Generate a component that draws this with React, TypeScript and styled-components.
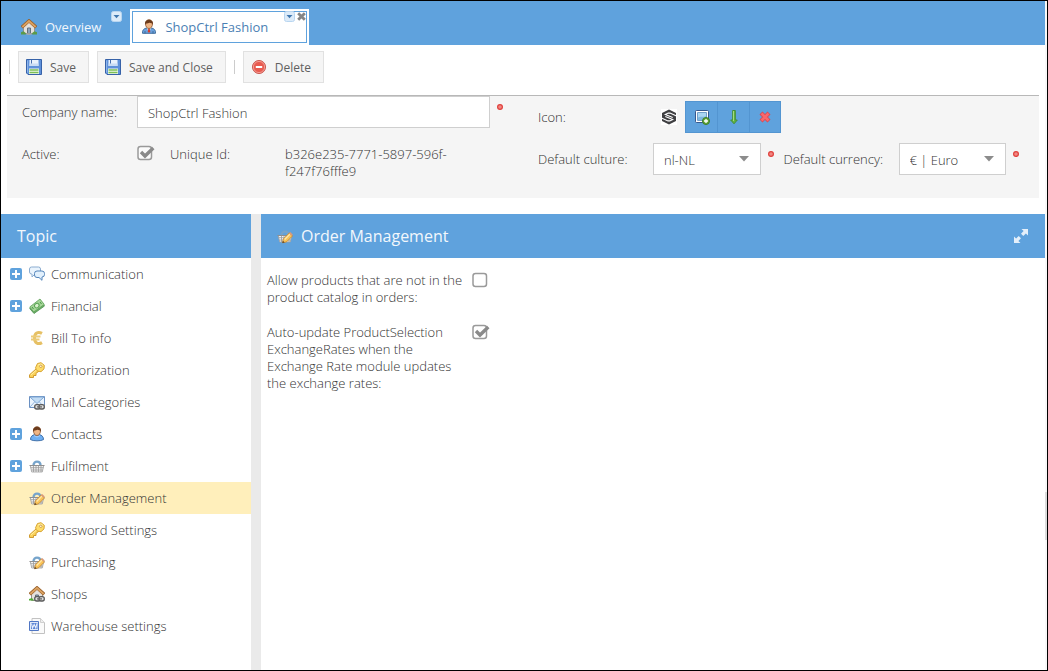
import React, { useState } from 'react';
import styled, { createGlobalStyle } from 'styled-components';

const blue = '#5fa2dd';

const GlobalStyle = createGlobalStyle`
  * { box-sizing: border-box; }
  body {
    margin: 0;
    background: #fff;
    color: #333;
    font: 300 13px/17px "Open Sans", "Noto Sans", sans-serif;
  }
  button, input, select { font: inherit; color: inherit; }
`;

const Frame = styled.div`
  display: flex;
  min-height: 100vh;
  border: 1px solid #000;
`;

const Page = styled.div`
  display: flex;
  flex-direction: column;
  flex: 1;
  min-width: 0;
`;

const ScrollRail = styled.div`
  display: grid;
  grid-template-rows: 491fr 48px 130fr;
  width: 2px;
  background: #f8f8f8;
`;

const ScrollThumb = styled.div`
  grid-row: 2;
  background: #dcdcdc;
`;

const TabBar = styled.nav`
  display: flex;
  align-items: flex-end;
  height: 44px;
  padding-left: 10px;
  background: ${blue};
`;

const TabItem = styled.div<{ $active?: boolean }>`
  position: relative;
  height: 36px;
  margin-right: ${p => (p.$active ? 0 : 5)}px;
  padding: 2px;
  background: ${p => (p.$active ? '#fff' : 'transparent')};
`;

const TabButton = styled.button<{ $active?: boolean }>`
  display: flex;
  align-items: center;
  gap: 8px;
  height: 32px;
  padding: 0 ${p => (p.$active ? 38 : 21)}px 0 ${p => (p.$active ? 8 : 7)}px;
  border: 1px solid ${blue};
  background: transparent;
  color: ${p => (p.$active ? '#4b7fb4' : '#f2f7fc')};
  font-weight: 400;
  white-space: nowrap;
`;

const TabBadges = styled.div`
  position: absolute;
  top: 2px;
  right: 3px;
  display: flex;
  gap: 2px;
`;

const BadgeButton = styled.button`
  display: flex;
  padding: 0;
  border: 0;
  background: transparent;
`;

const Toolbar = styled.div`
  display: flex;
  align-items: center;
  gap: 8px;
  height: 44px;
  padding-left: 8px;
`;

const Separator = styled.span`
  width: 1px;
  height: 14px;
  background: #ccc;
`;

const ToolButton = styled.button`
  display: flex;
  align-items: center;
  gap: 8px;
  height: 32px;
  padding: 0 12px 0 7px;
  border: 1px solid #e1e1e1;
  background: #f5f5f5;
  color: #606060;
  font-size: 12px;
  font-weight: 400;
`;

const CompanyForm = styled.form`
  display: grid;
  grid-template-columns: 1fr 1fr;
  height: 103px;
  margin: 6px 6px 16px;
  border-top: 1px solid #b8b8b8;
  background: #f5f5f5;
`;

const FormColumn = styled.div<{ $top?: number }>`
  display: flex;
  flex-direction: column;
  gap: 10px;
  min-width: 0;
  padding: ${p => p.$top || 0}px 10px 0 15px;
`;

const FormRow = styled.div`
  display: flex;
  align-items: flex-start;
  min-height: 32px;
`;

const FieldLabel = styled.label`
  flex: 0 0 115px;
  padding-top: 8px;
`;

const TextInput = styled.input`
  flex: 1;
  min-width: 0;
  height: 32px;
  padding: 2px 10px 0;
  border: 1px solid #cfcfcf;
  background: #fff;
  font-weight: 300;
`;

const RequiredMark = styled.span`
  display: flex;
  flex: 0 0 23px;
  padding: 8px 0 0 7px;
`;

const CheckCell = styled.span`
  display: flex;
  flex: 0 0 33px;
  padding-top: 7px;
`;

const UniqueValue = styled.output`
  flex: 1;
  padding-top: 8px;
`;

const CheckWrap = styled.span`
  display: grid;
  width: 18px;
  height: 18px;
  & > * { grid-area: 1 / 1; }
  svg { pointer-events: none; }
`;

const NativeCheck = styled.input`
  appearance: none;
  width: 18px;
  height: 18px;
  margin: 0;
`;

const SelectWrap = styled.span`
  display: grid;
  flex: 1;
  align-items: center;
  min-width: 0;
  & > * { grid-area: 1 / 1; }
  svg { justify-self: end; margin-right: 12px; pointer-events: none; }
`;

const NativeSelect = styled.select`
  appearance: none;
  width: 100%;
  height: 32px;
  padding: 2px 28px 0 10px;
  border: 1px solid #cfcfcf;
  border-radius: 0;
  background: #fff;
  font-weight: 300;
`;

const IconPreview = styled.span`
  display: flex;
  padding: 8px 8px 0;
`;

const IconActions = styled.div`
  display: flex;
  border: 1px solid #5395d1;
`;

const IconAction = styled.button`
  display: flex;
  align-items: center;
  justify-content: center;
  width: 31px;
  height: 30px;
  padding: 0;
  border: 0;
  background: ${blue};
  & + & { border-left: 1px solid #5395d1; }
  &:nth-child(2) { width: 32px; }
`;

const Workspace = styled.div`
  display: grid;
  grid-template-columns: 250px 10px 1fr;
  flex: 1;
`;

const Splitter = styled.div`
  background: #eaeaea;
`;

const PanelHeader = styled.header`
  display: flex;
  align-items: center;
  gap: 8px;
  height: 44px;
  padding: 0 16px;
  background: ${blue};
  color: #f2f7fc;
`;

const PanelTitle = styled.h2`
  flex: 1;
  margin: 0;
  font-size: 16px;
  line-height: 22px;
  font-weight: 400;
`;

const TopicList = styled.ul`
  margin: 0;
  padding: 0;
  list-style: none;
`;

const TopicRow = styled.li<{ $selected?: boolean }>`
  display: grid;
  grid-template-columns: 19px 1fr;
  align-items: center;
  height: 32px;
  padding-left: 9px;
  background: ${p => (p.$selected ? '#ffefbb' : 'transparent')};
`;

const TopicLink = styled.a`
  grid-column: 2;
  display: flex;
  align-items: center;
  gap: 6px;
  color: inherit;
  text-decoration: none;
`;

const Settings = styled.div`
  display: flex;
  flex-direction: column;
  gap: 18px;
  padding: 14px 6px;
`;

const SettingRow = styled.div`
  display: grid;
  grid-template-columns: 200px 18px;
  gap: 5px;
`;

/* ---------- icons ---------- */

const Svg = ({ w = 16, h = 16, children }: { w?: number; h?: number; children: React.ReactNode }) => (
  <svg width={w} height={h} viewBox={`0 0 ${w} ${h}`} fill="none" aria-hidden="true">{children}</svg>
);

const HouseShape = () => (
  <>
    <path d="M2.500 8 8 3l5.500 5v6.500h-11z" fill="#e4e1dc" stroke="#96928d" />
    <path d="M6.500 9h3v5.500h-3z" fill="#8aa3bd" stroke="#66707c" />
    <path d="M.8 8.300 8 1.800l7.200 6.500" stroke="#99602b" strokeWidth="3.200" />
    <path d="M1.300 8 8 2l6.700 6" stroke="#dba261" strokeWidth="1.700" />
  </>
);

const HouseIcon = () => (
  <Svg>
    <HouseShape />
    <path d="M0 15.500v-2.200l2.500-1 2.300 1.700v1.500zM16 15.500v-2.200l-2.500-1-2.300 1.700v1.500z" fill="#5b9a48" />
    <path d="M5.500 15h5" stroke="#aaa" strokeWidth="1.500" />
  </Svg>
);

const ChainShape = () => (
  <>
    <rect x="5.700" y="10.700" width="5.600" height="4.300" rx="2" fill="#ddd" stroke="#5a5a5a" strokeWidth="1.300" />
    <rect x="10" y="10.700" width="5.300" height="4.300" rx="2" fill="#ddd" stroke="#5a5a5a" strokeWidth="1.300" />
    <path d="M8 12.900h5" stroke="#666" strokeWidth="1.300" />
  </>
);

const ShopsIcon = () => (
  <Svg>
    <HouseShape />
    <path d="M0 14.500v-1.500l3-1 2 2.500z" fill="#4fae35" />
    <ChainShape />
  </Svg>
);

const HeadShape = () => (
  <>
    <path d="M4.500 4.500c0-5 7-5 7 0 0 3.200-1.600 5-3.500 5s-3.500-1.800-3.500-5z" fill="#f0b584" stroke="#88522d" strokeWidth=".8" />
    <path d="M4 5.700C3.200-.9 12.800-.9 12 5.700 11.200 3.700 9.800 4.200 8.400 3.700 6.600 4.500 5 3.900 4 5.700z" fill="#6c3b1c" />
  </>
);

const BusinessUserIcon = () => (
  <Svg>
    <path d="M1.500 14.300c-.4-3 1.400-4.800 4-5.300h5c2.600.5 4.400 2.300 4 5.300z" fill="#6ba1dd" stroke="#42709f" />
    <path d="M5.800 8.800h4.400L8 13.500z" fill="#f5f5f5" />
    <path d="M7.300 9.500h1.400l.5 3L8 14l-1.200-1.500z" fill="#d43d2c" />
    <path d="M4 12v2.500M12 12v2.500" stroke="#3f6c9c" />
    <HeadShape />
  </Svg>
);

const ContactIcon = () => (
  <Svg>
    <path d="M1.500 13.600c0-2.800 1.600-4.600 4.500-5h4c2.900.4 4.500 2.200 4.500 5-2.500 1.600-10.500 1.600-13 0z" fill="#6faff3" stroke="#3f70aa" />
    <path d="M5 9.500c1.800 1.800 4.200 1.800 6 0" stroke="#a7d0fb" />
    <HeadShape />
  </Svg>
);

const SaveIcon = () => (
  <Svg>
    <path d="M.5.500h15v15H2L.500 14z" fill="#5f91da" stroke="#3762a8" />
    <path d="M1.500 1.500v12" stroke="#8db4ea" />
    <path d="M3.500 1h9v6h-9z" fill="#eaf2fc" />
    <path d="M3.500 4.500h9V7h-9z" fill="#c9dcf4" />
    <path d="M5.500 1v3.500" stroke="#476fae" />
    <path d="M3 9.500h10v5.500H3z" fill="#f1f8ec" />
    <path d="M3.500 11h9M3.500 13.500h9" stroke="#7bbf55" strokeWidth="1.300" />
  </Svg>
);

const DeleteIcon = () => (
  <Svg>
    <circle cx="8" cy="8" r="6.500" fill="#e85b50" stroke="#c9564e" />
    <circle cx="8" cy="8" r="5.600" stroke="#f4a198" strokeWidth=".9" />
    <path d="M4.800 7h6.400v2H4.800z" fill="#fff" />
  </Svg>
);

const DropBadgeIcon = () => (
  <Svg w={11} h={11}>
    <rect x=".5" y=".5" width="10" height="10" rx="2" fill="#dcebf9" stroke="#b9d6f0" />
    <path d="M2.500 4h6l-3 3.200z" fill="#3f77af" />
  </Svg>
);

const CloseBadgeIcon = () => (
  <Svg w={9} h={11}>
    <path d="m1.200 2.200 6.600 6.600m0-6.600-6.600 6.600" stroke="#868686" strokeWidth="2.800" />
  </Svg>
);

const RequiredIcon = () => (
  <Svg w={6} h={6}>
    <circle cx="3" cy="3" r="2.400" fill="#f18782" stroke="#e0403c" strokeWidth="1.200" />
  </Svg>
);

const ShopCtrlLogo = () => (
  <Svg>
    <path d="M0 0h16v16H0z" fill="#fff" />
    <path d="M8 .5 15 4v8l-7 3.500L1 12V4z" fill="#3f3f42" />
    <path d="M15.500 7 9 4.100H7.200L4.300 5.500 11.700 8.600" stroke="#fff" strokeWidth="1.100" />
    <path d="M.5 9 7 11.900h1.800l2.900-1.400L4.300 7.400" stroke="#fff" strokeWidth="1.100" />
  </Svg>
);

const PictureAddIcon = () => (
  <Svg>
    <rect x="1.500" y="1.500" width="13" height="12" rx="1" fill="#fff" stroke="#36588d" />
    <path d="M3.500 3.500h9v8h-9z" fill="#a9d5f2" stroke="#729fca" />
    <path d="M4 8.500c3-2 5 .5 8-1.500v4H4z" fill="#7cb7df" />
    <circle cx="12" cy="12" r="3.500" fill="#65a83c" stroke="#3d7e26" />
    <path d="M12 10v4m-2-2h4" stroke="#fff" strokeWidth="1.300" />
  </Svg>
);

const DownArrowIcon = () => (
  <Svg>
    <path d="M6.700 1.500h2.600V11h2L8 14.800 4.700 11h2z" fill="#62b441" stroke="#448f38" />
    <path d="M7.500 2v10" stroke="#a5db82" />
  </Svg>
);

const RedCrossIcon = () => (
  <Svg>
    <path d="m4 4 8 8m0-8-8 8" stroke="#dc4650" strokeWidth="4.200" />
    <path d="m4.500 4.500 7 7m0-7-7 7" stroke="#fa686c" strokeWidth="2.600" />
  </Svg>
);

const CaretIcon = () => (
  <Svg w={10} h={6}>
    <path d="M0 0h10L5 5.500z" fill="#8c8c8c" />
  </Svg>
);

const ExpandIcon = () => (
  <Svg>
    <path d="M8.500 1H15v6.500l-2.100-2.100-2.600 2.600-2.300-2.300 2.600-2.600zM7.500 15H1V8.500l2.100 2.100L5.700 8 8 10.300l-2.600 2.600z" fill="#e4effa" />
  </Svg>
);

const PlusIcon = () => (
  <Svg w={12} h={12}>
    <rect width="12" height="12" rx="2" fill={blue} />
    <path d="M6 2v8M2 6h8" stroke="#fff" strokeWidth="2" />
  </Svg>
);

const ChatIcon = () => (
  <Svg>
    <path d="M2.500 1h7q2 0 2 2v3q0 2-2 2H6L3 11V8H2.500q-2 0-2-2V3q0-2 2-2z" fill="#eaf4fd" stroke="#8bacd0" />
    <path d="M8 5h5q2.500 0 2.500 2.500v1Q15.500 11 13 11v3.300L10 11.500H8q-2.500 0-2.500-2.500V7.500Q5.500 5 8 5z" fill="#e1f0fd" stroke="#5485bb" />
  </Svg>
);

const MoneyIcon = () => (
  <Svg>
    <path d="M.7 10.500 11.500 2.500l4 5.500L5 15.500z" fill="#6fb268" stroke="#4a8d4c" strokeWidth=".8" />
    <path d="M.7 9 11 1l4.300 5.500L4.700 14z" fill="#a5d697" stroke="#5da058" strokeWidth=".8" />
    <ellipse cx="7.800" cy="7.600" rx="2.400" ry="2.100" transform="rotate(-37 7.800 7.600)" fill="#d9f0cd" stroke="#5aa355" />
    <path d="m3 9 1.500 2M11 4l1.500 2" stroke="#4b944b" />
  </Svg>
);

const EuroIcon = () => (
  <Svg>
    <path d="M13 3.400C8.800 1 5.500 3.300 5.500 8S8.800 15 13 12.600" stroke="#e6c064" strokeWidth="3" />
    <path d="M2 6.500h9.500M2 9.500h8.500" stroke="#ebcb78" strokeWidth="2" />
  </Svg>
);

const KeyIcon = () => (
  <Svg>
    <path d="m7.500 6.500-7 6.300V15.500h4v-2H7v-2.200l3.300-2.300" fill="#fbd35b" stroke="#d09c32" />
    <path d="M8.500 1.500 12 .7l3.300 2.600-.3 3.600-3 2.800-3.700-.7-1.800-3.200z" fill="#fedc68" stroke="#d8a436" />
    <path d="m9 3 3-1 2 1.500M7.500 8 2 12.800" stroke="#fff0a5" />
    <circle cx="11.800" cy="4.300" r="1.200" fill="#fff" stroke="#c8902c" strokeWidth=".8" />
  </Svg>
);

const MailIcon = () => (
  <Svg>
    <path d="M.5 2.500h15v11H.500z" fill="#e9f3fd" stroke="#6a90c2" />
    <path d="m1 13 5-5.500m9 5.500-5-5.500" stroke="#91b4dc" />
    <path d="M1 3h14L8 9.500z" fill="#c2dcf4" stroke="#7ea6d3" />
    <path d="M6 11h9.500v4H6z" fill="#d5dde5" />
    <ChainShape />
  </Svg>
);

const BasketShape = () => (
  <>
    <path d="M4.500 7.500C4.500 2.300 11.500 2.300 11.500 7.500" stroke="#76a4cb" strokeWidth="2.400" />
    <path d="M1.300 7.500h13.400l-1.400 6.500H2.700z" fill="#f4f4f4" stroke="#a0a0a0" strokeWidth=".8" />
    <path d="M4.500 7v7M7 7v7m2.500-7v7M12 7v7M1.500 9.700h13m-12 2.300h11.300" stroke="#999" strokeWidth=".8" />
    <path d="M.5 7.500h15" stroke="#8f8f8f" />
  </>
);

const BasketIcon = () => <Svg><BasketShape /></Svg>;

const BasketEditIcon = () => (
  <Svg>
    <BasketShape />
    <path d="m5.500 14.800.9-4 6-6 3.100 3.100-6 6z" fill="#fac458" stroke="#c08636" strokeWidth=".8" />
    <path d="m7.700 11.500 5.300-5.300" stroke="#ffe9ae" strokeWidth="1.200" />
    <path d="m12 5.200 1.200-1.200 2.600 2.600-1.200 1.200z" fill="#d99a7c" />
    <path d="m5.300 15 .6-2.300 1.800 1.800z" fill="#54402c" />
  </Svg>
);

const DocIcon = () => (
  <Svg>
    <path d="M3 .5h8.500l4 4v11H3z" fill="#fafafa" stroke="#c2c2c2" />
    <path d="M11.500.500v4h4" fill="#eee" stroke="#cfcfcf" />
    <path d="M.5 3.500h9v9h-9z" fill="#dfe8f8" stroke="#5076c4" />
    <path d="M2 5h6.500v6H2z" fill="#5c85d6" />
    <path d="m2.500 5.500 1 4.500L5.200 6.500l1.600 3.500L8 5.500" stroke="#e8effb" strokeWidth="1.100" />
  </Svg>
);

const CheckBox = ({ id, initial = false }: { id: string; initial?: boolean }) => {
  const [on, setOn] = useState(initial);
  return (
    <CheckWrap>
      <NativeCheck id={id} type="checkbox" checked={on} onChange={() => setOn(!on)} />
      <Svg w={18} h={18}>
        <rect x="1" y="1.500" width="13.500" height="13" rx="2.500" fill="#fff" fillOpacity=".6" stroke="#9a9a9a" strokeWidth="1.500" />
        {on && <path d="m4 7 4 4L16.300 3" stroke="#8a8a8a" strokeWidth="3.400" />}
      </Svg>
    </CheckWrap>
  );
};

const Required = () => <RequiredMark title="Required"><RequiredIcon /></RequiredMark>;

const Dropdown = ({ id, value }: { id: string; value: string }) => (
  <SelectWrap>
    <NativeSelect id={id} defaultValue={value}><option>{value}</option></NativeSelect>
    <CaretIcon />
  </SelectWrap>
);

type Topic = { name: string; icon: React.ComponentType; expandable?: boolean };

const topics: Topic[] = [
  { name: 'Communication', icon: ChatIcon, expandable: true },
  { name: 'Financial', icon: MoneyIcon, expandable: true },
  { name: 'Bill To info', icon: EuroIcon },
  { name: 'Authorization', icon: KeyIcon },
  { name: 'Mail Categories', icon: MailIcon },
  { name: 'Contacts', icon: ContactIcon, expandable: true },
  { name: 'Fulfilment', icon: BasketIcon, expandable: true },
  { name: 'Order Management', icon: BasketEditIcon },
  { name: 'Password Settings', icon: KeyIcon },
  { name: 'Purchasing', icon: BasketEditIcon },
  { name: 'Shops', icon: ShopsIcon },
  { name: 'Warehouse settings', icon: DocIcon },
];

export default function App() {
  const [selected, setSelected] = useState('Order Management');
  return (
    <Frame>
      <GlobalStyle />
      <Page>
        <TabBar>
          <TabItem>
            <TabButton><HouseIcon />Overview</TabButton>
            <TabBadges>
              <BadgeButton aria-label="Overview menu"><DropBadgeIcon /></BadgeButton>
            </TabBadges>
          </TabItem>
          <TabItem $active>
            <TabButton $active><BusinessUserIcon />ShopCtrl Fashion</TabButton>
            <TabBadges>
              <BadgeButton aria-label="Tab menu"><DropBadgeIcon /></BadgeButton>
              <BadgeButton aria-label="Close tab"><CloseBadgeIcon /></BadgeButton>
            </TabBadges>
          </TabItem>
        </TabBar>

        <Toolbar>
          <Separator />
          <ToolButton><SaveIcon />Save</ToolButton>
          <ToolButton><SaveIcon />Save and Close</ToolButton>
          <Separator />
          <ToolButton><DeleteIcon />Delete</ToolButton>
        </Toolbar>

        <CompanyForm onSubmit={e => e.preventDefault()}>
          <FormColumn>
            <FormRow>
              <FieldLabel htmlFor="company">Company name:</FieldLabel>
              <TextInput id="company" defaultValue="ShopCtrl Fashion" />
              <Required />
            </FormRow>
            <FormRow>
              <FieldLabel htmlFor="active">Active:</FieldLabel>
              <CheckCell><CheckBox id="active" initial /></CheckCell>
              <FieldLabel htmlFor="uid">Unique Id:</FieldLabel>
              <UniqueValue id="uid">b326e235-7771-5897-596f-f247f76fffe9</UniqueValue>
            </FormRow>
          </FormColumn>
          <FormColumn $top={5}>
            <FormRow>
              <FieldLabel as="span">Icon:</FieldLabel>
              <IconPreview><ShopCtrlLogo /></IconPreview>
              <IconActions>
                <IconAction type="button" aria-label="Upload icon"><PictureAddIcon /></IconAction>
                <IconAction type="button" aria-label="Download icon"><DownArrowIcon /></IconAction>
                <IconAction type="button" aria-label="Remove icon"><RedCrossIcon /></IconAction>
              </IconActions>
            </FormRow>
            <FormRow>
              <FieldLabel htmlFor="culture">Default culture:</FieldLabel>
              <Dropdown id="culture" value="nl-NL" />
              <Required />
              <FieldLabel htmlFor="currency">Default currency:</FieldLabel>
              <Dropdown id="currency" value="€ | Euro" />
              <Required />
            </FormRow>
          </FormColumn>
        </CompanyForm>

        <Workspace>
          <aside>
            <PanelHeader><PanelTitle>Topic</PanelTitle></PanelHeader>
            <TopicList>
              {topics.map(({ name, icon: Icon, expandable }) => (
                <TopicRow key={name} $selected={name === selected}>
                  {expandable && <BadgeButton aria-label={`Expand ${name}`}><PlusIcon /></BadgeButton>}
                  <TopicLink href="#" onClick={e => { e.preventDefault(); setSelected(name); }}>
                    <Icon />{name}
                  </TopicLink>
                </TopicRow>
              ))}
            </TopicList>
          </aside>
          <Splitter />
          <main>
            <PanelHeader>
              <BasketEditIcon />
              <PanelTitle>Order Management</PanelTitle>
              <BadgeButton aria-label="Expand panel"><ExpandIcon /></BadgeButton>
            </PanelHeader>
            <Settings>
              <SettingRow>
                <label htmlFor="allow">Allow products that are not in the product catalog in orders:</label>
                <CheckBox id="allow" />
              </SettingRow>
              <SettingRow>
                <label htmlFor="auto">Auto-update ProductSelection ExchangeRates when the Exchange Rate module updates the exchange rates:</label>
                <CheckBox id="auto" initial />
              </SettingRow>
            </Settings>
          </main>
        </Workspace>
      </Page>
      <ScrollRail><ScrollThumb /></ScrollRail>
    </Frame>
  );
}
